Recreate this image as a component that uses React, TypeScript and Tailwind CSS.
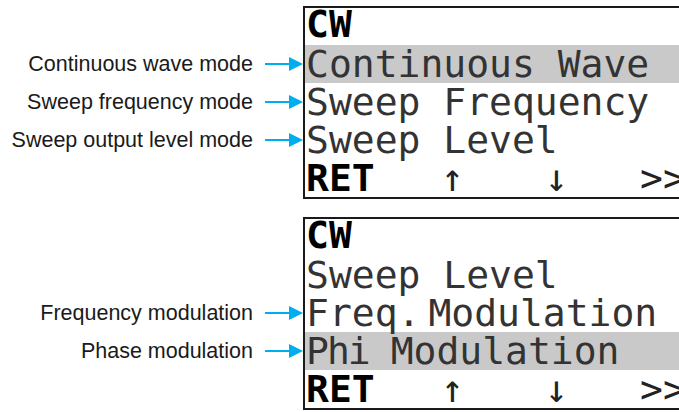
const lcd = { fontFamily: '"DejaVu Sans Mono", "Liberation Mono", monospace' };
const sans = { fontFamily: '"Liberation Sans", Arial, sans-serif' };

type Row = { text: React.ReactNode; label?: string; active?: boolean };

function Arrow() {
  return (
    <svg width="38" height="16" viewBox="0 0 38 16" className="shrink-0">
      <line x1="0" y1="8" x2="28" y2="8" stroke="#00aeef" strokeWidth="2" />
      <polygon points="24,1 38,8 24,15" fill="#00aeef" />
    </svg>
  );
}

function Panel({ rows }: { rows: Row[] }) {
  return (
    <div className="flex">
      <div className="flex w-[303px] shrink-0 flex-col pt-[2px]">
        <div className="h-[37px]" />
        {rows.map((r, i) => (
          <div key={i} className="flex h-[38px] items-center justify-end gap-[12px]" style={sans}>
            {r.label && (
              <>
                <span className="text-[21.5px] text-[#1a1a1a]">{r.label}</span>
                <Arrow />
              </>
            )}
          </div>
        ))}
        <div className="h-[38px]" />
      </div>
      <div className="w-[420px] shrink-0 border-2 border-[#1a1a1a] bg-white" style={lcd}>
        <div className="flex h-[37px] items-center overflow-hidden pl-[1px] text-[38px] font-bold leading-none text-black">
          <span className="-mt-[6px]">CW</span>
        </div>
        {rows.map((r, i) => (
          <div
            key={i}
            className={`flex h-[38px] items-center pl-[1px] text-[38px] leading-none text-[#333] ${
              r.active ? "bg-[#c9c9c9]" : ""
            }`}
          >
            {r.text}
          </div>
        ))}
        <div className="flex h-[38px] items-center text-[38px] leading-none text-black">
          <span className="w-[136px] pl-[1px] font-bold">RET</span>
          <span className="w-[104px] text-[#222]">↑</span>
          <span className="w-[95px] text-[#222]">↓</span>
          <span className="text-[#222]">&gt;&gt;</span>
        </div>
      </div>
    </div>
  );
}

export default function App() {
  return (
    <div className="h-[412px] w-[679px] overflow-hidden bg-white">
      <div className="pt-[6px]">
        <Panel
          rows={[
            { text: "Continuous Wave", label: "Continuous wave mode", active: true },
            { text: "Sweep Frequency", label: "Sweep frequency mode" },
            { text: "Sweep Level", label: "Sweep output level mode" },
          ]}
        />
      </div>
      <div className="pt-[18px]">
        <Panel
          rows={[
            { text: "Sweep Level" },
            {
              text: (
                <>
                  <span>Freq.</span>
                  <span className="ml-[8px]">Modulation</span>
                </>
              ),
              label: "Frequency modulation",
            },
            {
              text: (
                <>
                  <span className="tracking-[-2px]">Phi</span>
                  <span className="ml-[22px]">Modulation</span>
                </>
              ),
              label: "Phase modulation",
              active: true,
            },
          ]}
        />
      </div>
    </div>
  );
}
